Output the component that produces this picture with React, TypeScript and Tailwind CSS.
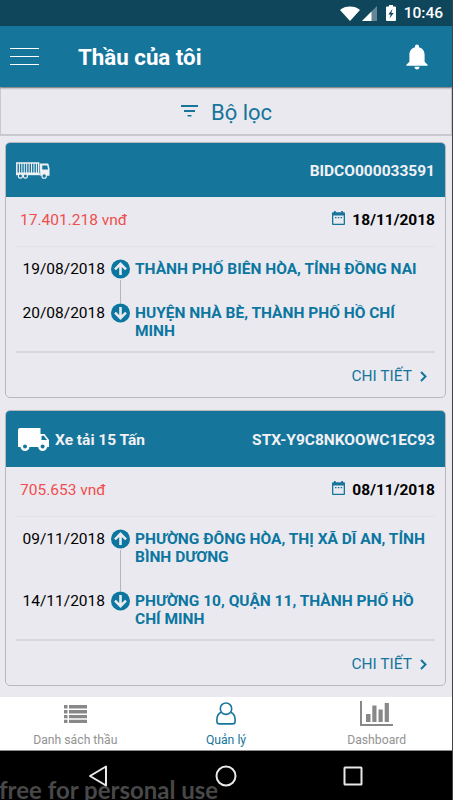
import type { ReactNode } from 'react'

interface Stop {
  date: string
  place: string
}

interface Bid {
  code: string
  vehicle: 'container' | 'truck'
  vehicleName?: string
  price: string
  date: string
  from: Stop
  to: Stop
}

const BIDS: Bid[] = [
  {
    code: 'BIDCO000033591',
    vehicle: 'container',
    price: '17.401.218 vnđ',
    date: '18/11/2018',
    from: { date: '19/08/2018', place: 'THÀNH PHỐ BIÊN HÒA, TỈNH ĐỒNG NAI' },
    to: { date: '20/08/2018', place: 'HUYỆN NHÀ BÈ, THÀNH PHỐ HỒ CHÍ MINH' },
  },
  {
    code: 'STX-Y9C8NKOOWC1EC93',
    vehicle: 'truck',
    vehicleName: 'Xe tải 15 Tấn',
    price: '705.653 vnđ',
    date: '08/11/2018',
    from: { date: '09/11/2018', place: 'PHƯỜNG ĐÔNG HÒA, THỊ XÃ DĨ AN, TỈNH BÌNH DƯƠNG' },
    to: { date: '14/11/2018', place: 'PHƯỜNG 10, QUẬN 11, THÀNH PHỐ HỒ CHÍ MINH' },
  },
]

export default function App() {
  return (
    <div className="relative flex h-[800px] w-[453px] flex-col overflow-hidden border-r border-[#3c4447] bg-[#eae9ef] font-[Roboto,sans-serif] whitespace-nowrap">
      <StatusBar />
      <header className="relative z-10 flex h-[61px] shrink-0 items-center bg-[#16759b] pr-[24px] pl-[10px] text-white shadow-[0_1px_2px_rgba(0,0,0,0.45)]">
        <div className="flex w-[29px] flex-col gap-[7px]">
          <span className="h-px bg-white" />
          <span className="h-px bg-white" />
          <span className="h-px bg-white" />
        </div>
        <h1 className="ml-[39px] pt-px text-[22.300px] leading-7 font-bold">Thầu của tôi</h1>
        <svg className="ml-auto" width="22" height="26" viewBox="0 0 22 26" fill="#fff">
          <path d="M11 .5c1.2 0 2 .8 2 2v.7c3.6.9 5.6 3.8 5.6 7.6v6.9l3 3v1H.4v-1l3-3v-6.9c0-3.800 2-6.700 5.600-7.600v-.7c0-1.200.8-2 2-2z" />
          <path d="M8.500 22.800h5c0 1.600-1.100 2.700-2.500 2.700s-2.500-1.100-2.500-2.700z" />
        </svg>
      </header>

      <button type="button" className="flex h-[49px] shrink-0 items-center border border-b-2 border-[#c9c8cc] pl-[180px] text-[22px] text-[#16759b]">
        <svg width="17" height="12" viewBox="0 0 17 12" fill="currentColor">
          <path d="M0 0h17v2H0zM3 5h11v2H3zM6.500 10h4v1.500h-4z" />
        </svg>
        <span className="ml-[13px] pt-[2px]">Bộ lọc</span>
      </button>

      <main className="flex grow flex-col gap-[12px] pt-[6px] pr-[6px] pl-[5px]">
        {BIDS.map(bid => (
          <BidCard key={bid.code} bid={bid} />
        ))}
      </main>

      <nav className="flex h-[53px] shrink-0 bg-white text-[#929292]">
        <Tab label="Danh sách thầu">
          <svg width="23" height="18" viewBox="0 0 23 18" fill="#888">
            <path d="M0 0h3.500v3.500H0zM5 0h18v3.500H5zM0 5h3.500v3.500H0zM5 5h18v3.500H5zM0 10h3.500v3.200H0zM5 10h18v3.200H5zM0 14.800h3.500V18H0zM5 14.800h18V18H5z" />
          </svg>
        </Tab>
        <Tab label="Quản lý" active>
          <svg width="20" height="23" viewBox="0 0 20 23" fill="none" stroke="currentColor" strokeWidth="1.600">
            <path d="M5.300 10.300C2.200 11.500.9 14.300.9 18v1.200c0 1.800.9 2.700 2.700 2.700h12.800c1.800 0 2.700-.9 2.700-2.700V18c0-3.700-1.300-6.500-4.400-7.700" />
            <circle cx="10" cy="6.700" r="5.700" />
          </svg>
        </Tab>
        <Tab label="Dashboard">
          <svg width="33" height="25" viewBox="0 0 33 25" fill="#888">
            <path d="M0 0h2v23h31v2H0zM6 13h4.500v8H6zM12.300 4.500h4.200V21h-4.200zM18.500 8.500h4.200V21h-4.200zM24.700 2h4.200v19h-4.200z" />
          </svg>
        </Tab>
      </nav>

      <footer className="relative flex h-[50px] shrink-0 items-center justify-between border-t border-[#8c8c8c] bg-black pt-px pr-[89px] pl-[88px]">
        <span className="absolute bottom-0 left-[-1px] font-[Lato,sans-serif] text-[24px] leading-[20px] font-bold text-[#484848]">
          free for personal use
        </span>
        <svg className="relative" width="20" height="22" viewBox="0 0 20 22" fill="none" stroke="#e8e8e8" strokeWidth="2" strokeLinejoin="round">
          <path d="M18 1.500v19L2 11z" />
        </svg>
        <svg className="relative" width="22" height="22" viewBox="0 0 22 22" fill="none" stroke="#e8e8e8" strokeWidth="2">
          <circle cx="11" cy="11" r="9.500" />
        </svg>
        <svg className="relative" width="20" height="20" viewBox="0 0 20 20" fill="none" stroke="#e8e8e8" strokeWidth="2">
          <rect x="1.500" y="1.500" width="17" height="17" rx="0.500" />
        </svg>
      </footer>
    </div>
  )
}

function StatusBar() {
  return (
    <div className="flex h-[26px] shrink-0 items-center bg-[#0f465c] pr-[9px] text-white">
      <svg className="ml-auto" width="20" height="15" viewBox="0 0 20 16" preserveAspectRatio="none" fill="#fff">
        <path d="M10 16 0 4.200C2.700 1.700 6.200.5 10 .5s7.300 1.200 10 3.700z" />
      </svg>
      <svg className="ml-[2px]" width="15" height="15" viewBox="0 0 15 15" fill="#fff">
        <path d="M15 0v15H0z" opacity="0.350" />
        <path d="M9.500 5.500V15H0z" />
      </svg>
      <svg className="ml-[9px]" width="10" height="16" viewBox="0 0 10 16">
        <path d="M3 0h4v1.500h2q1 0 1 1V15q0 1-1 1H1q-1 0-1-1V2.500q0-1 1-1h2z" fill="#fff" />
        <path d="M6.500 4 2.300 9.500h2.400L3.500 13.500 7.700 8H5.300z" fill="#0f465c" />
      </svg>
      <span className="ml-[8px] text-[15.500px] leading-5 font-medium">10:46</span>
    </div>
  )
}

function BidCard({ bid }: { bid: Bid }) {
  return (
    <section className="rounded-[5px] border border-[#b9b9bd]">
      <div
        className={`flex items-center rounded-t-[4px] bg-[#16759b] pr-[10px] text-[15.500px] font-bold text-[#f1f1f5] ${
          bid.vehicle === 'truck' ? 'h-[56px] pl-[12px]' : 'h-[54px] pl-[10px]'
        }`}
      >
        {bid.vehicle === 'truck' ? <TruckIcon /> : <ContainerTruckIcon />}
        {bid.vehicleName && <span className="ml-[6px] pt-[3px]">{bid.vehicleName}</span>}
        <span className="ml-auto pt-[4px]">{bid.code}</span>
      </div>
      <div className="mx-[10px]">
        <div className="flex h-[50px] items-center border-b border-[#e3e2e8] pl-[4px] text-[15.500px]">
          <span className="pb-[2px] text-[#f04e4e]">{bid.price}</span>
          <CalendarIcon />
          <span className="ml-[7px] pb-[2px] font-bold text-black">{bid.date}</span>
        </div>
        <div className="pt-[13px] pb-[11px]">
          <StopRow stop={bid.from} up />
          <StopRow stop={bid.to} />
        </div>
        <div className="flex h-[46px] items-center justify-end border-t-2 border-[#d8d7dc] pr-[8px] text-[15.500px] text-[#16759b]">
          <span className="pt-[3px]">CHI TIẾT</span>
          <svg className="mt-[2px] ml-[8px]" width="7" height="11" viewBox="0 0 7 11" fill="none" stroke="currentColor" strokeWidth="2">
            <path d="M1 1l4.500 4.500L1 10" />
          </svg>
        </div>
      </div>
    </section>
  )
}

function StopRow({ stop, up }: { stop: Stop; up?: boolean }) {
  return (
    <div className="flex text-[15.500px] leading-[18px]">
      <span className="w-[95px] pl-[6.500px] text-black">{stop.date}</span>
      <div className="-mt-[1px] flex w-[19px] flex-col items-center">
        <svg width="19" height="20" viewBox="0 0 19 20">
          <circle cx="9.500" cy="10" r="9.500" fill="#0b769f" />
          <path
            d={up ? 'M9.500 16V5M4 10.400l5.500-5.500 5.500 5.500' : 'M9.500 4v11M4 9.600l5.500 5.500 5.500-5.500'}
            fill="none"
            stroke="#eae9ef"
            strokeWidth="2.600"
          />
        </svg>
        {up && <span className="my-[1px] w-px grow bg-[#b5b5b5]" />}
      </div>
      <span className={`ml-[5px] w-[300px] font-bold whitespace-normal text-[#0b769f] ${up ? 'pb-[26px]' : ''}`}>
        {stop.place}
      </span>
    </div>
  )
}

function Tab({ label, active, children }: { label: string; active?: boolean; children: ReactNode }) {
  return (
    <div className={`flex flex-1 flex-col items-center ${active ? 'text-[#16759b]' : ''}`}>
      <div className="flex h-[35px] items-center">{children}</div>
      <span className="pt-px text-[12.200px] leading-[19px]">{label}</span>
    </div>
  )
}

function CalendarIcon() {
  return (
    <svg className="mb-[8px] ml-auto" width="13" height="14" viewBox="0 0 13 14" fill="#16759b">
      <path fillRule="evenodd" d="M2 0h1.700v1.300h5.600V0H11v1.300h1q1 0 1 1V13q0 1-1 1H1q-1 0-1-1V2.300q0-1 1-1h1zM1.300 4.500v8.200h10.400V4.500z" />
      <path d="M3 6h1.500v1.300H3zM5.800 6h1.500v1.300H5.800zM8.600 6h1.500v1.300H8.600z" />
    </svg>
  )
}

function TruckIcon() {
  return (
    <svg width="31" height="23" viewBox="0 0 31 23" fill="#fff">
      <path fillRule="evenodd" d="M2 0h20.500v6h4L31 12v7h-2.500a4 4 0 0 1-7.800 0H11a4 4 0 0 1-7.800 0H0V2q0-2 2-2zM23.500 7.800V12H29l-3.200-4.200z" />
      <circle cx="7" cy="18.500" r="4.500" />
      <circle cx="7" cy="18.500" r="2" fill="#16759b" />
      <circle cx="24.600" cy="18.500" r="4.500" />
      <circle cx="24.600" cy="18.500" r="2" fill="#16759b" />
    </svg>
  )
}

function ContainerTruckIcon() {
  return (
    <svg width="34" height="17" viewBox="0 0 35 17" preserveAspectRatio="none" fill="none" stroke="#f1f1f5" strokeWidth="1.100">
      <path d="M.8 1h22.500v10.300H.8z" strokeWidth="1.500" />
      <path d="M3.500 1v10.500M6 1v10.500M8.500 1v10.500M11 1v10.500M13.500 1v10.500M16 1v10.500M18.500 1v10.500M21 1v10.500" />
      <path d="M0 12.300h25" strokeWidth="1.800" />
      <path fill="#f1f1f5" fillRule="evenodd" stroke="none" d="M24.500 1.500h8q.8 0 1 .8l1 4.500v7H25zM27 3.500v4h6l-.8-4z" />
      <g fill="#16759b">
        <circle cx="4.500" cy="14" r="2.100" />
        <circle cx="9.700" cy="14" r="2.100" />
        <circle cx="29" cy="14" r="2.300" />
      </g>
    </svg>
  )
}
